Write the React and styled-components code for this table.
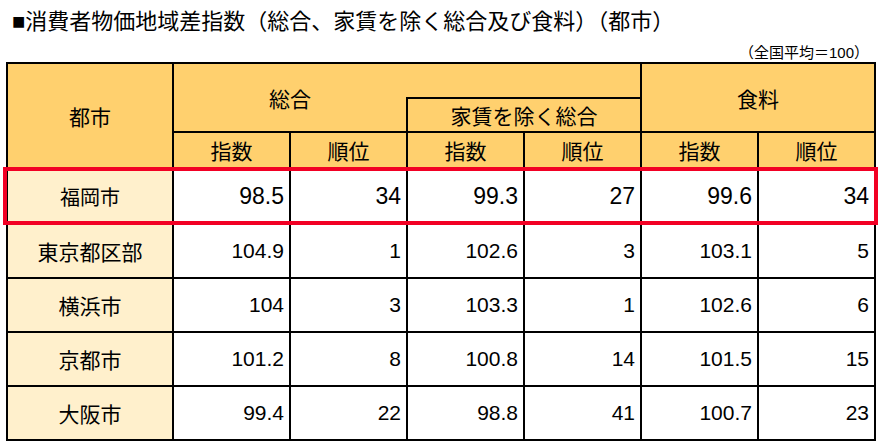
import React from "react";
import styled, { createGlobalStyle } from "styled-components";

const GlobalStyle = createGlobalStyle`
  html, body {
    margin: 0;
    padding: 0;
    background: #fff;
  }
  body {
    font-family: "Liberation Sans", "Noto Sans CJK JP", sans-serif;
    color: #000;
  }
`;

const cols = [
  { label: "指数", key: "idx" },
  { label: "順位", key: "rank" },
];

const rows = [
  { city: "福岡市", values: ["98.5", "34", "99.3", "27", "99.6", "34"], highlight: true },
  { city: "東京都区部", values: ["104.9", "1", "102.6", "3", "103.1", "5"] },
  { city: "横浜市", values: ["104", "3", "103.3", "1", "102.6", "6"] },
  { city: "京都市", values: ["101.2", "8", "100.8", "14", "101.5", "15"] },
  { city: "大阪市", values: ["99.4", "22", "98.8", "41", "100.7", "23"] },
];

const App = () => {
  return (
    <>
      <GlobalStyle />
      <Page>
        <Title>■消費者物価地域差指数（総合、家賃を除く総合及び食料）（都市）</Title>
        <Note>（全国平均＝100）</Note>
        <TableWrap>
          <Grid>
            <HeadCell $col="1" $row="1 / span 3">都市</HeadCell>
            <HeadCell $col="2 / span 4" $row="1" aria-hidden="true" />
            <HeadCell $col="2 / span 2" $row="1 / span 2">総合</HeadCell>
            <HeadCell $col="4 / span 2" $row="2">家賃を除く総合</HeadCell>
            <HeadCell $col="6 / span 2" $row="1 / span 2">食料</HeadCell>
            {[0, 1, 2].map((g) =>
              cols.map((c) => (
                <HeadCell key={g + c.key} $row="3">
                  {c.label}
                </HeadCell>
              ))
            )}
            {rows.map((r) => (
              <React.Fragment key={r.city}>
                <CityCell $big={r.highlight}>{r.city}</CityCell>
                {r.values.map((v, i) => (
                  <NumCell key={i} $big={r.highlight}>
                    {v}
                  </NumCell>
                ))}
              </React.Fragment>
            ))}
          </Grid>
          <Highlight />
        </TableWrap>
      </Page>
    </>
  );
};

export default App;

const Page = styled.div`
  width: 885px;
  padding: 10px 0 0 6px;
  box-sizing: border-box;
`;

const Title = styled.h1`
  margin: 0 0 0 6px;
  font-family: "Liberation Sans", "Noto Sans CJK JP", sans-serif;
  font-size: 22px;
  font-weight: 400;
  line-height: 24px;
  white-space: nowrap;
`;

const Note = styled.div`
  margin-top: 10px;
  padding-right: 16px;
  text-align: right;
  font-family: "Liberation Sans", "Noto Sans CJK JP", sans-serif;
  font-size: 15px;
  line-height: 18px;
`;

const TableWrap = styled.div`
  position: relative;
  width: fit-content;
`;

const Grid = styled.div`
  display: grid;
  grid-template-columns: 164px repeat(6, 115px);
  grid-template-rows: 33px 32px 34px 54px repeat(4, 52px);
  gap: 2px;
  background: #000;
  border: 2px solid #000;
`;

const Cell = styled.div`
  display: flex;
  align-items: center;
  font-family: "Liberation Sans", "Noto Sans CJK JP", sans-serif;
  font-weight: 400;
`;

const HeadCell = styled(Cell)`
  grid-column: ${(p) => p.$col || "auto"};
  grid-row: ${(p) => p.$row || "auto"};
  justify-content: center;
  background: #ffd06e;
  font-size: 21px;
`;

const CityCell = styled(Cell)`
  justify-content: center;
  background: #fff0cc;
  font-size: ${(p) => (p.$big ? "20px" : "21px")};
`;

const NumCell = styled(Cell)`
  justify-content: flex-end;
  padding-right: 5px;
  background: #fff;
  font-size: ${(p) => (p.$big ? "23px" : "21px")};
`;

const Highlight = styled.div`
  position: absolute;
  left: -3px;
  top: 105px;
  width: 875px;
  height: 58px;
  box-sizing: border-box;
  border: 4px solid #f20024;
  pointer-events: none;
`;
